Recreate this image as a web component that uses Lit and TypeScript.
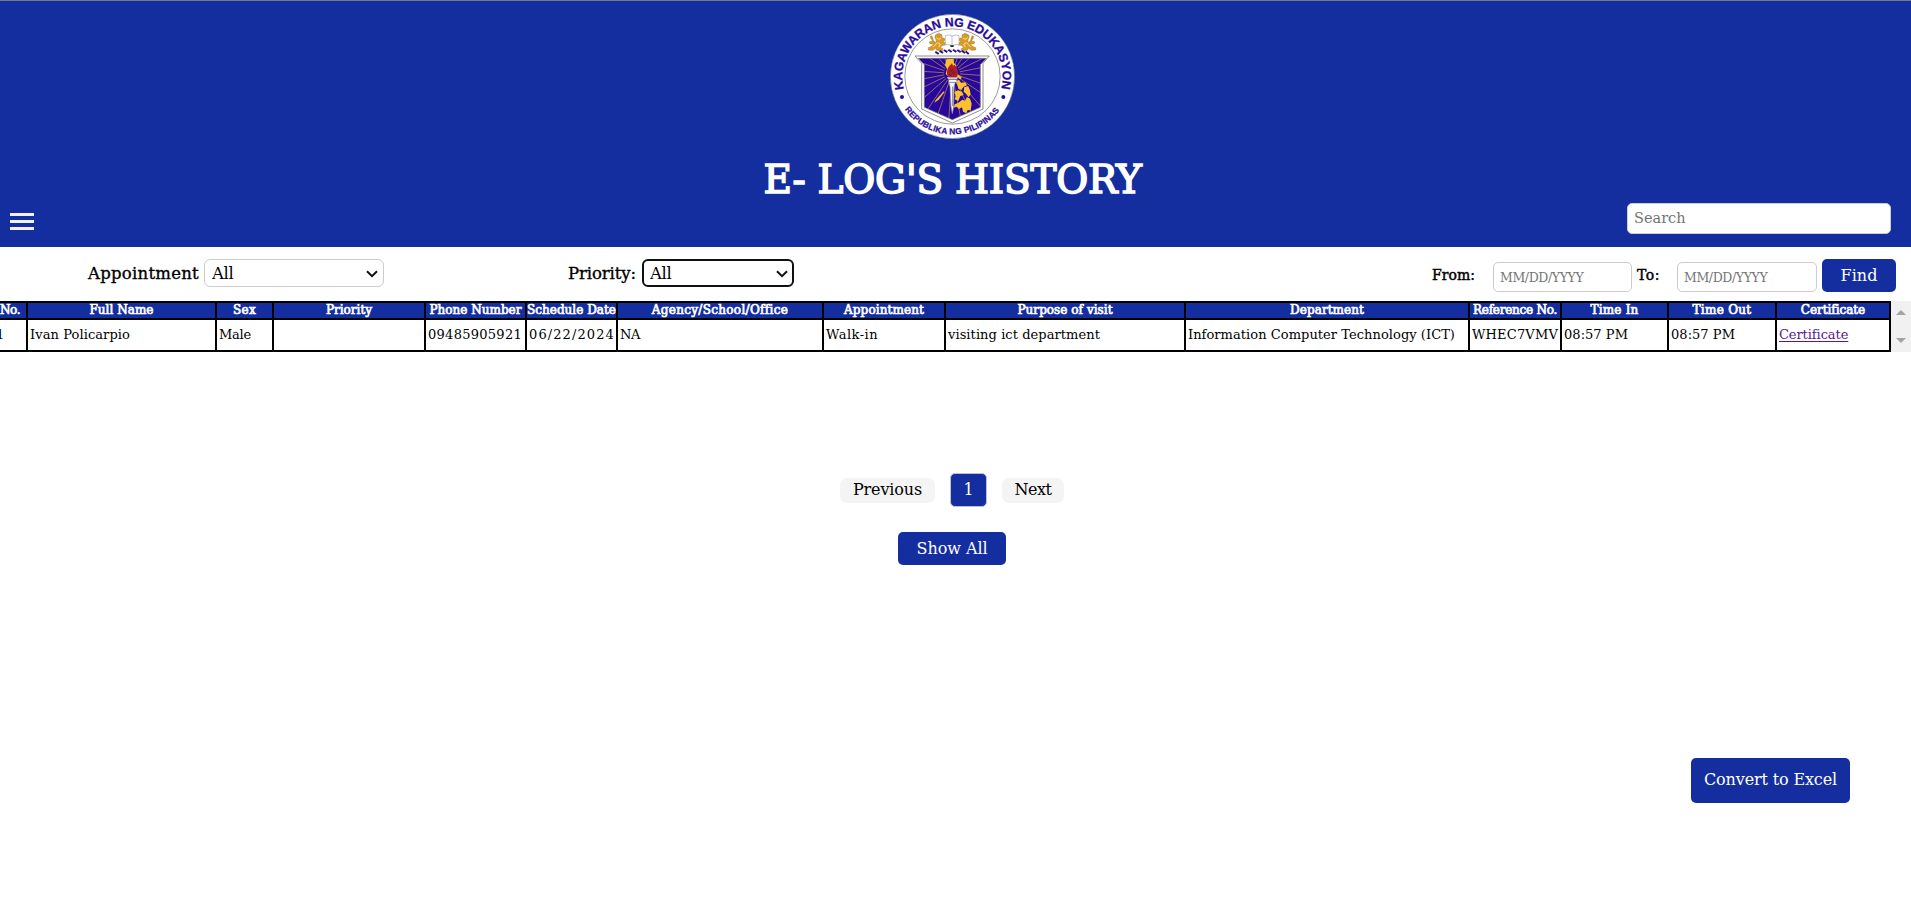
import { LitElement, html, css, svg } from "lit";
import { customElement, property, state } from "lit/decorators.js";

/** One line of text whose tracking is adjusted so that it spans a given width. */
@customElement("fit-text")
class FitText extends LitElement {
  static styles = css`
    :host { display: inline-block; white-space: pre; text-align: left; }
    .t { display: inline-block; }
    :host(.link) .t { text-decoration: underline; text-underline-offset: 2px; text-decoration-thickness: 1px; }
  `;
  @property({ type: Number }) width = 0;
  @property() text = "";

  render() {
    return html`<span class="t">${this.text}</span>`;
  }
  updated() {
    const el = this.renderRoot.querySelector(".t") as HTMLElement;
    el.style.letterSpacing = "0px";
    const natural = el.getBoundingClientRect().width;
    const gap = (this.width - natural) / Math.max(1, this.text.length);
    el.style.letterSpacing = gap.toFixed(3) + "px";
  }
}

@customElement("deped-seal")
class DepedSeal extends LitElement {
  static styles = css`
    :host { display: block; width: 125px; height: 125px; }
    svg { display: block; width: 100%; height: 100%; }
    text { font-family: "Liberation Sans", Arial, sans-serif; font-weight: 700; fill: #2a0c9c; stroke: #2a0c9c; stroke-width: 0.8px; }
  `;

  render() {
    const rays = Array.from({ length: 24 }, (_, i) => {
      const a = ((i * 15 + 4) * Math.PI) / 180;
      return svg`<line x1=${246 + 24 * Math.cos(a)} y1=${220 + 24 * Math.sin(a)} x2=${246 + 150 * Math.cos(a)} y2=${220 + 150 * Math.sin(a)} />`;
    });
    return html`
      <svg viewBox="60 42 375 375" role="img" aria-label="Kagawaran ng Edukasyon">
        <defs>
          <path id="top" d="M101.8 267.3A150.5 150.5 0 1 1 393.2 267.3" />
          <path id="bottom" d="M104 327A173.5 173.5 0 0 0 391 327" />
          <clipPath id="sh"><path d="M145 175H349L331 194V322L247 359L163 322V194Z" /></clipPath>
        </defs>
        <circle cx="247.5" cy="229.5" r="186.5" fill="#fff" stroke="#555a78" stroke-width="1.6" />
        <circle cx="247.5" cy="229.5" r="143" fill="#fff" stroke="#666" stroke-width="2" />
        <text font-size="37"><textPath href="#top" startOffset="0" textLength="548" lengthAdjust="spacing">KAGAWARAN NG EDUKASYON</textPath></text>
        <text font-size="25"><textPath href="#bottom" startOffset="1" textLength="332" lengthAdjust="spacing">REPUBLIKA NG PILIPINAS</textPath></text>
        <circle cx="96" cy="291" r="6" fill="#2a0c9c" />
        <circle cx="400" cy="291" r="6" fill="#2a0c9c" />

        <path d="M135 168H358L339 190V327L247 369L155 327V190Z" fill="#fff" stroke="#777" stroke-width="2.5" />
        <path d="M145 175H349L331 194V322L247 359L163 322V194Z" fill="#28089a" stroke="#777" stroke-width="2" />
        <g clip-path="url(#sh)">
          <g stroke="#b98a5e" stroke-width="2.2">${rays}</g>
          <g fill="#fbc02d">
            <path d="M229 178L251 176L252 189L259 196L256 208L263 222L275 232L272 238L257 230L240 234L227 222L231 207L225 195Z" />
            <path d="M257 244l10-5 6 9 13-1 5 9-11 5-6 9-9-4-3-12zM253 276l11-5 12 4 5 10-10 3-6 15-11-5 3-9zM283 262l11-4 5 10 3 15-6 9-8-11-7-6zM265 308l12-9 8 3 6-11 9 5 5 15-3 20-9-1-4 10-10-5-3-13-9 5-7-7-9 3 3-10z" />
            <path d="M221 274l3 2-18 23-13 9 4-8z" />
          </g>
        </g>
        <path d="M236 247h20l-4 13-1 60-4 21-4-21-3-60z" fill="#f4f4f4" stroke="#88889a" stroke-width="2" />
        <path d="M248 260v58" stroke="#85858f" stroke-width="3" />
        <path d="M231 231h33l-3 7h-27z" fill="#d4d4d4" stroke="#777" />
        <path d="M236 239h24v7h-24z" fill="#fff" stroke="#777" />
        <path d="M246 190q-13 11-15 24-1 13 5 18h24q6-11 3-23-5-12-10-15-3-1-2 6-3-4-5-10z" fill="#a71e2d" />
        <path d="M241 206l2 10 5-8 4 14 4-7M237 221l6 5 5-9" fill="none" stroke="#7b1120" stroke-width="2" />

        <path d="M186 108q-6-2-4 6l6 10-9 1q-4 3 2 6l10 2-6 6-10 4v7l13 1 8-6 4 6 18 1v-6l-8-5 9-5 10-2v-6l-10-1 5-6-1-6-8-2 1-8-10-5-10 5-1 8 4 7-2 9-7-8z" fill="#d89b26" stroke="#a9721b" stroke-width="1.5" />
        <path d="M190 140l13-12 8 5-5 8M199 113l7 5 7-4" stroke="#fff0bd" stroke-width="2.5" fill="none" />
        <g transform="translate(492 0) scale(-1 1)">
          <path d="M186 108q-6-2-4 6l6 10-9 1q-4 3 2 6l10 2-6 6-10 4v7l13 1 8-6 4 6 18 1v-6l-8-5 9-5 10-2v-6l-10-1 5-6-1-6-8-2 1-8-10-5-10 5-1 8 4 7-2 9-7-8z" fill="#d89b26" stroke="#a9721b" stroke-width="1.5" />
          <path d="M190 140l13-12 8 5-5 8M199 113l7 5 7-4" stroke="#fff0bd" stroke-width="2.5" fill="none" />
        </g>
        <path d="M226 107q12-5 20 1 9-6 21-1v28q-12-4-21 2-8-6-20-2z" fill="#fff" stroke="#888" stroke-width="1.5" />
        <path d="M246 108v29" stroke="#888" stroke-width="1.5" />
        <path d="M240 136h12l-2 5h-8z" fill="#222" />
        <path d="M196 160q48-20 102 0" fill="none" stroke="#bbb" stroke-width="2" />
        <g stroke="#26108c" stroke-width="5.5">
          <path d="M196 155l10 7M209 152l10 7M222 150l10 7M235 149l10 7M249 149l10 7M262 150l10 7M275 152l10 7M287 154l9 8" />
        </g>
      </svg>
    `;
  }
}

interface Column { name: string; size: number; head: number; value: string; body: number; link?: boolean; }

@customElement("app-root")
class AppRoot extends LitElement {
  static styles = css`
    * { box-sizing: border-box; }
    :host {
      display: block; width: 100%; height: 909px; overflow: hidden; background: #fff; color: #000;
      font-family: "DejaVu Serif", serif; font-size: 16px;
    }
    fit-text { flex: none; }
    .banner {
      height: 247px; background: #152e9f; border-top: 1px solid #737883; color: #fff;
      display: flex; flex-direction: column; align-items: center; padding-top: 13px;
    }
    .seal { margin-right: 6px; }
    .title { margin: 18px 6px 0 0; height: 46px; line-height: 46px; font-size: 39px; font-weight: 400; -webkit-text-stroke: 1.6px #fff; }
    .bar { align-self: stretch; display: flex; justify-content: space-between; padding: 0 20px 0 10px; }
    .burger { display: flex; flex-direction: column; gap: 4px; width: 24px; margin-top: 10px; }
    .line { height: 3px; background: #f1f3fb; }
    input {
      font-family: inherit; border: 1px solid #ccc; border-radius: 5px; outline: none; background: #fff;
      padding: 0 6px; margin: 0;
    }
    input::placeholder { color: #757575; opacity: 1; }
    .search { width: 264px; height: 31px; font-size: 14.5px; letter-spacing: 0; padding-left: 6px; padding-bottom: 2px; }
    .filters { height: 54px; display: flex; align-items: flex-start; padding: 12px 15px 0 88px; }
    .label { font-size: 16.5px; line-height: 29px; -webkit-text-stroke: 0.35px #000; }
    .pick { width: 180px; height: 28px; margin-left: 5px; display: grid; }
    .pick.second { width: 152px; margin-left: 6px; }
    .pick > * { grid-area: 1 / 1; }
    select {
      appearance: none; width: 100%; height: 100%; background: #fff; border: 1px solid #ccc; border-radius: 6px;
      font: 16.5px "DejaVu Serif", serif; letter-spacing: -0.4px; color: #000; padding: 0 7px; outline: none;
    }
    .second select { border: 2px solid #101010; padding-left: 6px; }
    .chev { justify-self: end; align-self: center; margin: 1px 6px 0 0; width: 12px; height: 8px; pointer-events: none; }
    .gap { width: 184px; flex: none; }
    .grow { flex: 1; }
    .small { font-size: 14px; line-height: 33px; -webkit-text-stroke: 0.45px #000; }
    .date { height: 30px; margin-top: 3px; font-size: 12.5px; letter-spacing: -0.38px; flex: none; }
    .from { width: 139px; margin-left: 18px; margin-right: 5px; }
    .to { width: 140px; margin-left: 17px; margin-right: 5px; }
    button {
      font-family: inherit; font-size: 16px; border: 0; padding: 0; margin: 0; display: flex;
      justify-content: center; align-items: center; background: #152e9f; color: #fff; border-radius: 5px;
    }
    .find { width: 74px; height: 33px; padding-bottom: 1px; }
    .area { display: flex; height: 51px; }
    .grid { display: grid; width: 1891px; grid-template-rows: 19px 32px; }
    .th, .td { border-right: 2px solid #000; border-bottom: 2px solid #000; display: flex; white-space: nowrap; overflow: hidden; }
    .th {
      border-top: 2px solid #000; background: #152e9f; color: #fff; justify-content: center; font-size: 12px;
      line-height: 15px; -webkit-text-stroke: 0.7px #fff;
    }
    .td { font-size: 13px; line-height: 29px; padding-left: 2px; }
    .td.first { padding-left: 0; justify-content: flex-start; }
    .td.first fit-text { margin-left: -4px; }
    .th.first { justify-content: flex-start; }
    .link { color: #551a8b; }
    .scroll {
      width: 20px; background: #f1f1f1; display: flex; flex-direction: column; align-items: center;
      justify-content: space-between; padding: 9px 0;
    }
    .scroll svg { width: 10px; height: 5px; display: block; fill: #a3a3a3; }
    .pager { margin: 121px 7px 0 0; display: flex; justify-content: center; align-items: center; gap: 15px; }
    .step { background: #f4f4f4; color: #000; height: 25px; border-radius: 7px; padding-bottom: 1px; }
    .prev { width: 95px; }
    .next { width: 62px; }
    .page { width: 37px; height: 34px; border: 1px solid #bfc3cf; padding-bottom: 1px; }
    .all { width: 108px; height: 33px; margin: 25px auto 0 898px; padding-bottom: 1px; }
    .excel { width: 159px; height: 45px; margin: 193px 61px 0 auto; padding-bottom: 2px; }
  `;

  @state() private columns: Column[] = [
    { name: "No.", size: 28, head: 20, value: "1", body: 8 },
    { name: "Full Name", size: 189, head: 64, value: "Ivan Policarpio", body: 100 },
    { name: "Sex", size: 57, head: 23, value: "Male", body: 32 },
    { name: "Priority", size: 152, head: 46, value: "", body: 0 },
    { name: "Phone Number", size: 101, head: 92, value: "09485905921", body: 94 },
    { name: "Schedule Date", size: 91, head: 89, value: "06/22/2024", body: 86 },
    { name: "Agency/School/Office", size: 206, head: 136, value: "NA", body: 20 },
    { name: "Appointment", size: 122, head: 80, value: "Walk-in", body: 52 },
    { name: "Purpose of visit", size: 240, head: 95, value: "visiting ict department", body: 152 },
    { name: "Department", size: 284, head: 74, value: "Information Computer Technology (ICT)", body: 267 },
    { name: "Reference No.", size: 92, head: 84, value: "WHEC7VMV", body: 86 },
    { name: "Time In", size: 107, head: 48, value: "08:57 PM", body: 64 },
    { name: "Time Out", size: 108, head: 59, value: "08:57 PM", body: 64 },
    { name: "Certificate", size: 114, head: 64, value: "Certificate", body: 69, link: true },
  ];

  private chevron() {
    return html`<svg class="chev" viewBox="0 0 12 8"><path d="M1 1.2L6 6.2L11 1.2" fill="none" stroke="#111" stroke-width="2" /></svg>`;
  }

  render() {
    const tracks = this.columns.map((c) => c.size + "px").join(" ");
    return html`
      <header class="banner">
        <deped-seal class="seal"></deped-seal>
        <h1 class="title"><fit-text width="378" text="E- LOG'S HISTORY"></fit-text></h1>
        <div class="bar">
          <div class="burger"><div class="line"></div><div class="line"></div><div class="line"></div></div>
          <input class="search" placeholder="Search" />
        </div>
      </header>
      <section class="filters">
        <fit-text class="label" width="111" text="Appointment"></fit-text>
        <div class="pick"><select><option>All</option></select>${this.chevron()}</div>
        <div class="gap"></div>
        <fit-text class="label" width="68" text="Priority:"></fit-text>
        <div class="pick second"><select><option>All</option></select>${this.chevron()}</div>
        <div class="grow"></div>
        <fit-text class="small" width="43" text="From:"></fit-text>
        <input class="date from" placeholder="MM/DD/YYYY" />
        <fit-text class="small" width="23" text="To:"></fit-text>
        <input class="date to" placeholder="MM/DD/YYYY" />
        <button class="find"><fit-text width="37" text="Find"></fit-text></button>
      </section>
      <section class="area">
        <div class="grid" style="grid-template-columns:${tracks}">
          ${this.columns.map((c, i) => html`<div class="th ${i ? "" : "first"}"><fit-text width=${c.head} text=${c.name}></fit-text></div>`)}
          ${this.columns.map((c, i) => html`<div class="td ${i ? "" : "first"}">${c.value
            ? html`<fit-text class=${c.link ? "link" : ""} width=${c.body} text=${c.value}></fit-text>` : ""}</div>`)}
        </div>
        <div class="scroll">
          <svg viewBox="0 0 10 5"><path d="M0 5L5 0L10 5Z" /></svg>
          <svg viewBox="0 0 10 5"><path d="M0 0L5 5L10 0Z" /></svg>
        </div>
      </section>
      <nav class="pager">
        <button class="step prev"><fit-text width="69" text="Previous"></fit-text></button>
        <button class="page">1</button>
        <button class="step next"><fit-text width="37" text="Next"></fit-text></button>
      </nav>
      <button class="all"><fit-text width="71" text="Show All"></fit-text></button>
      <button class="excel"><fit-text width="133" text="Convert to Excel"></fit-text></button>
    `;
  }
}
